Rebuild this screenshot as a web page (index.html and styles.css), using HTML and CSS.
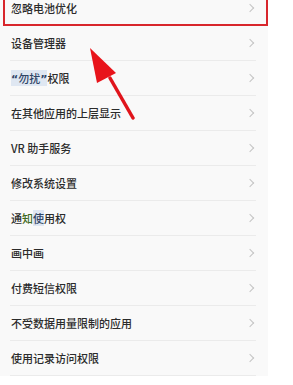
FILE: index.html
```html
<!DOCTYPE html>
<html lang="zh-CN">
<head>
    <meta charset="UTF-8">
    <meta name="viewport" content="width=device-width, initial-scale=1.0">
    <title>权限设置</title>
    <link rel="stylesheet" href="styles.css">
</head>
<body>
    <div class="screen">
        <ul class="menu">
            <li class="item"><span>忽略电池优化</span><i class="chev"></i></li>
            <li class="item"><span>设备管理器</span><i class="chev"></i></li>
            <li class="item"><span><span class="hl-blue"><span class="q">“</span>勿扰<span class="q">”</span></span>权限</span><i class="chev"></i></li>
            <li class="item"><span>在其他应用的上层显示</span><i class="chev"></i></li>
            <li class="item"><span>VR 助手服务</span><i class="chev"></i></li>
            <li class="item"><span>修改系统设置</span><i class="chev"></i></li>
            <li class="item"><span>通<span class="hl-green">知</span><span class="hl-blue">使</span>用权</span><i class="chev"></i></li>
            <li class="item"><span>画中画</span><i class="chev"></i></li>
            <li class="item"><span>付费短信权限</span><i class="chev"></i></li>
            <li class="item"><span>不受数据用量限制的应用</span><i class="chev"></i></li>
            <li class="item"><span>使用记录访问权限</span><i class="chev"></i></li>
        </ul>

        <!-- annotation drawn over the list -->
        <div class="mark-box"></div>
        <svg class="mark-arrow" width="60" height="80" viewBox="0 0 60 80">
            <line x1="21" y1="31" x2="44" y2="71" stroke="#e0141b" stroke-width="3.5" stroke-linecap="round"/>
            <polygon points="1,1 27,26 8,36" fill="#e8141b"/>
        </svg>
    </div>
</body>
</html>
```

FILE: styles.css
```css
body {
    margin: 0;
    background: #fff;
    font-family: "Noto Sans CJK SC", "Noto Sans", sans-serif;
}
.screen {
    position: relative;
    height: 385px;
    overflow: hidden;
}
.menu {
    list-style: none;
    margin: -9px 0 0;
    padding: 0;
    width: 268px;
    background: #f9f9f9;
}
.item {
    height: 34px;
    margin: 0 12px 0 10px;
    padding: 0 2px 0 1px;
    border-bottom: 1px solid #ebebeb;
    display: flex;
    align-items: center;
    justify-content: space-between;
    font-size: 11px;
    font-weight: 500;
    color: #2b2b2b;
}
.chev {
    width: 5px;
    height: 5px;
    border-top: 1px solid #c4c4c4;
    border-right: 1px solid #c4c4c4;
    transform: rotate(45deg);
    margin-right: 1px;
}
.q {
    font-family: "DejaVu Sans", sans-serif;
    font-weight: bold;
}
.hl-blue {
    color: #2f4566;
    background: #dfe7f2;
}
.hl-green {
    color: #3f6a22;
}
.mark-box {
    position: absolute;
    left: 3px;
    top: -4px;
    width: 261px;
    height: 26px;
    border: 2px solid #d8262c;
}
.mark-arrow {
    position: absolute;
    left: 89px;
    top: 47px;
}
```
